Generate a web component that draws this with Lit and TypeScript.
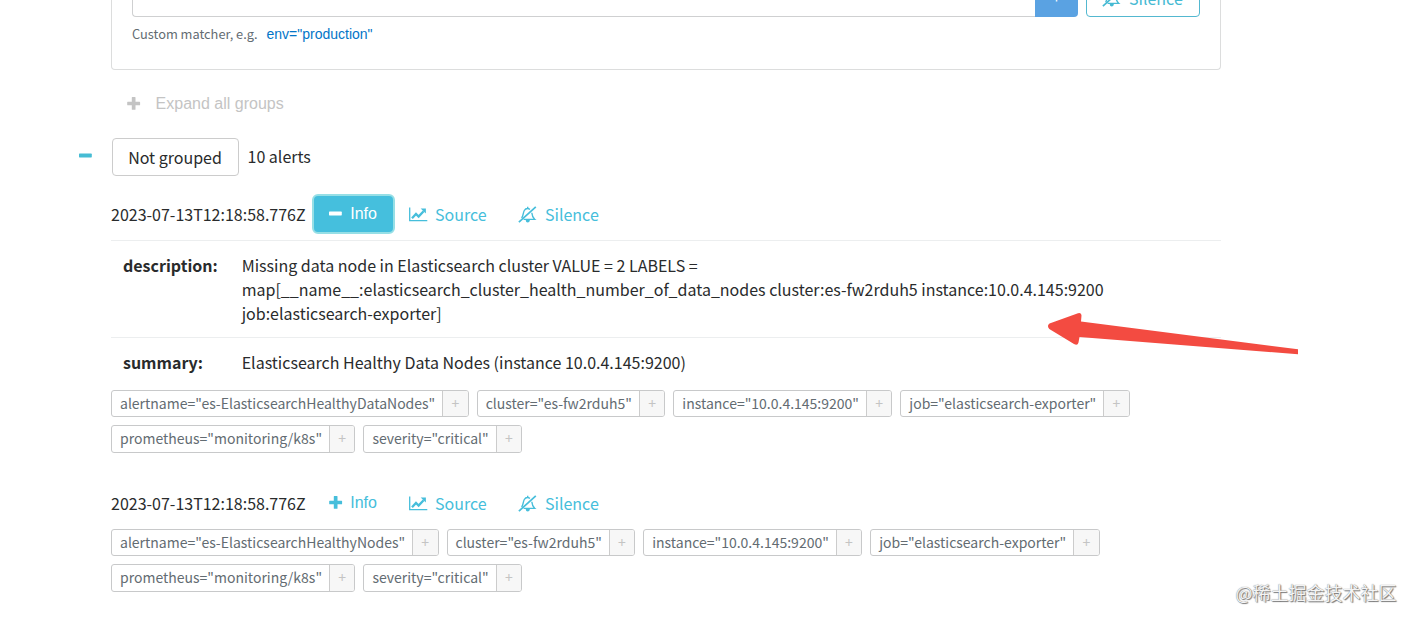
import { LitElement, html, css, svg } from "lit";
import { customElement } from "lit/decorators.js";

interface Alert {
  open: boolean;
  annotations: [string, string][];
  labels: string[][];
}

const common = (name: string) => [
  [name, 'cluster="es-fw2rduh5"', 'instance="10.0.4.145:9200"', 'job="elasticsearch-exporter"'],
  ['prometheus="monitoring/k8s"', 'severity="critical"'],
];

const ALERTS: Alert[] = [
  {
    open: true,
    annotations: [
      [
        "description",
        "Missing data node in Elasticsearch cluster VALUE = 2 LABELS = map[__name__:elasticsearch_cluster_health_number_of_data_nodes cluster:es-fw2rduh5 instance:10.0.4.145:9200 job:elasticsearch-exporter]",
      ],
      ["summary", "Elasticsearch Healthy Data Nodes (instance 10.0.4.145:9200)"],
    ],
    labels: common('alertname="es-ElasticsearchHealthyDataNodes"'),
  },
  { open: false, annotations: [], labels: common('alertname="es-ElasticsearchHealthyNodes"') },
];

const plus = html`<svg class="glyph" width="14" height="14" viewBox="0 0 14 14">
  ${svg`<path fill="currentColor" d="M5.300 .1h2.700q.5 0 .5.5v4.100h4.100q.5 0 .5.5v2.500q0 .5-.5.5H8.500v4.100q0 .5-.5.5H5.300q-.5 0-.5-.5V8.200H.7q-.5 0-.5-.5V5.200q0-.5.5-.5h4.100V.6q0-.5.5-.5z"/>`}
</svg>`;
const minus = html`<svg class="glyph" width="14" height="14" viewBox="0 0 14 14">
  ${svg`<rect x="0" y="4.600" width="12.800" height="3.800" rx=".6" fill="currentColor"/>`}
</svg>`;
const chart = html`<svg class="glyph" width="19" height="16" viewBox="0 0 19 16">
  ${svg`<path fill="none" stroke="currentColor" stroke-width="1.300" d="M.7 1.600v13.100H18.300"/>
    <path fill="none" stroke="currentColor" stroke-width="2.300" d="M3 12.200l4-4.200 2.600 2.500 5-5.300"/>
    <path fill="currentColor" d="M11.700 2.400h5.200v5.200z"/>`}
</svg>`;
const bell = html`<svg class="glyph" width="19" height="18" viewBox="0 0 19 18">
  ${svg`<path fill="none" stroke="currentColor" stroke-width="1.700" d="M.9 17.100L17.800 1.900"/>
    <path fill="none" stroke="currentColor" stroke-width="1.400" d="M3.600 13C5.400 10.800 5 7.600 6.300 5.500 7.300 3.900 9.700 3.100 12 4.300M9.700 3.600V1.800M13.800 7.700c.2 2.800 1.100 4.900 3 6.700H5.600"/>
    <path fill="currentColor" d="M7.600 14.800h4.400q-.3 2.700-2.300 2.700t-2.100-2.700z"/>`}
</svg>`;

@customElement("app-root")
export class AppRoot extends LitElement {
  static styles = css`
    :host {
      display: block;
      position: relative;
      height: 623px;
      overflow: hidden;
      background: #fff;
      color: #292b2c;
      font: 16px/24px "Noto Sans CJK SC", sans-serif;
    }
    * { box-sizing: border-box; }
    .page { width: 1110px; margin-left: 111px; }
    .glyph { flex: none; display: block; }
    .card {
      height: 70px;
      border: 1px solid #dcdddd;
      border-top: 0;
      border-radius: 0 0 4px 4px;
      padding: 0 20px;
      overflow: hidden;
    }
    .entry { display: flex; height: 17px; align-items: flex-end; }
    .field { width: 903px; height: 38px; flex: none; border: 1px solid #cfd0d1; border-radius: 4px 0 0 4px; border-right: 0; }
    .add {
      width: 43px; height: 38px; flex: none; margin-right: 8px;
      border-radius: 0 4px 4px 0; background: #5aa2e2; color: #fff;
      display: flex; align-items: center; justify-content: center; padding-bottom: 4px;
    }
    .outline {
      width: 114px; height: 38px; flex: none; color: #46bad3;
      border: 1px solid #53b8d0; border-radius: 4px;
      display: flex; align-items: center; padding: 0 15px; gap: 8px;
    }
    .hint { display: flex; font-size: 12.8px; line-height: 20px; margin-top: 7px; color: #636c72; }
    .env { margin-left: 9px; font: 14px/20px "Liberation Sans", sans-serif; color: #0275c8; }
    .expand {
      display: flex; align-items: center; gap: 15px; height: 24px; margin: 22px 0 0 15.6px;
      color: #c4c4c4; font-family: "Liberation Sans", sans-serif;
    }
    .group { display: flex; align-items: center; height: 38px; margin: 22px 0 0 -33px; }
    .toggle { color: #46bcd4; width: 34px; height: 17px; padding-left: .8px; }
    .badge {
      width: 127px; height: 38px; border: 1px solid #ccc; border-radius: 4px;
      display: flex; align-items: center; justify-content: center; padding-right: 1px;
    }
    .count { margin-left: 8.500px; padding-bottom: 2px; }
    .alert { padding-top: 18px; }
    .alert + .alert { padding-top: 30px; }
    .head { display: flex; height: 40px; align-items: center; }
    .time { width: 201px; white-space: nowrap; padding-bottom: 1px; }
    .info {
      display: flex; align-items: center; gap: 7px; width: 83px; height: 40px;
      padding: 0 0 1px 15.200px; border-radius: 6px; border: 2px solid transparent;
      color: #46bedb; font-family: "Liberation Sans", sans-serif;
    }
    .on { background: #45bfdd; border-color: #96dfe6; color: #fff; }
    .link { display: flex; align-items: center; color: #46bedb; padding-bottom: 1px; }
    .source { width: 109.500px; gap: 7.500px; margin-left: 13.500px; }
    .silence { gap: 8px; }
    .notes { margin-top: 6px; }
    .note { display: flex; border-top: 1px solid #eceeef; padding: 12px 12px 12px; }
    .key { width: 118.700px; flex: none; font-weight: 700; }
    .value { width: 910px; }
    .labels { display: flex; flex-direction: column; gap: 8px; margin-top: 4px; }
    .alert + .alert .labels { margin-top: 6px; }
    .line { display: flex; gap: 8px; height: 27px; }
    .line:last-child { height: 28px; }
    .chip {
      display: flex; border: 1px solid #c8c9ca; border-radius: 3px; overflow: hidden;
      font-size: 14px; line-height: 25px; color: #636c72; white-space: nowrap;
    }
    .text { padding: 0 6.900px 0 8px; }
    .more {
      width: 25.500px; border-left: 1px solid #ccc; background: #f7f7f7; color: #c4c4c4;
      text-align: center;
    }
    .arrow { position: absolute; left: 1040px; top: 305px; }
    .mark {
      position: absolute; right: 18.500px; top: 579px; font-size: 18px; line-height: 26px;
      color: #f4f4f4; text-shadow: 0 0 1px #666, 1px 1px 1px #777;
    }
  `;

  private renderAlert(a: Alert) {
    return html`<section class="alert">
      <div class="head">
        <span class="time">2023-07-13T12:18:58.776Z</span>
        <span class="info ${a.open ? "on" : ""}">${a.open ? minus : plus}<span>Info</span></span>
        <span class="link source">${chart}<span>Source</span></span>
        <span class="link silence">${bell}<span>Silence</span></span>
      </div>
      ${a.open
        ? html`<div class="notes">
            ${a.annotations.map(
              ([k, v]) => html`<div class="note"><span class="key">${k}:</span><span class="value">${v}</span></div>`
            )}
          </div>`
        : ""}
      <div class="labels">
        ${a.labels.map(
          (line) => html`<div class="line">
            ${line.map((l) => html`<span class="chip"><span class="text">${l}</span><span class="more">+</span></span>`)}
          </div>`
        )}
      </div>
    </section>`;
  }

  render() {
    return html`
      <main class="page">
        <div class="card">
          <div class="entry">
            <div class="field"></div>
            <div class="add">+</div>
            <div class="outline">${bell}<span>Silence</span></div>
          </div>
          <div class="hint"><span>Custom matcher, e.g.</span><span class="env">env="production"</span></div>
        </div>
        <div class="expand">${plus}<span>Expand all groups</span></div>
        <div class="group">
          <span class="toggle">${minus}</span>
          <span class="badge">Not grouped</span>
          <span class="count">10 alerts</span>
        </div>
        ${ALERTS.map((a) => this.renderAlert(a))}
      </main>
      <svg class="arrow" width="265" height="60" viewBox="0 0 265 60">
        <path fill="#f34b41" d="M9.500 18.500L38 8.200Q41.500 7.200 41.500 10.500L41 16.500 258 44.300V49.300L39.500 32 38.500 37.500Q37.600 41.200 34 39L9.300 24Q6.500 20.500 9.500 18.500z" />
      </svg>
      <div class="mark">@稀土掘金技术社区</div>
    `;
  }
}
